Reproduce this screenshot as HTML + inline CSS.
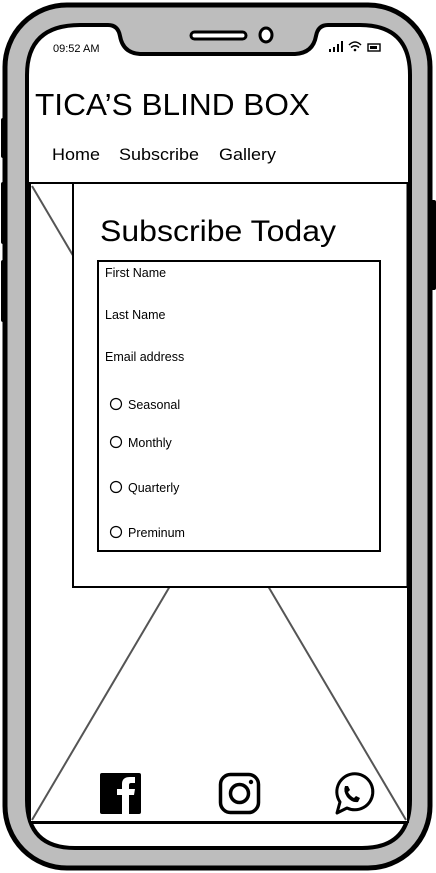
<!DOCTYPE html>
<html><head><meta charset="utf-8"><style>
html,body{margin:0;padding:0;background:#fff;width:436px;height:873px;overflow:hidden}
svg{display:block}
text{font-family:"Liberation Sans",sans-serif;fill:#000}
</style></head><body>
<svg width="436" height="873" viewBox="0 0 436 873" xmlns="http://www.w3.org/2000/svg">
<!-- side buttons -->
<rect x="1" y="118" width="6" height="40" rx="2" fill="#000"/>
<rect x="1" y="182" width="6" height="62" rx="2" fill="#000"/>
<rect x="1" y="260" width="6" height="62" rx="2" fill="#000"/>
<rect x="430" y="200" width="6" height="90" rx="2" fill="#000"/>
<!-- outer body -->
<rect x="5" y="5" width="425" height="863" rx="62" fill="#bdbdbd" stroke="#000" stroke-width="5"/>
<!-- screen -->
<path d="M80 25 L108 25 Q118 25 120 36 Q123 53 140 54 L295 54 Q313 53 316 36 Q318 25 328 25 L360 25 Q410 25 410 75 L410 800 Q410 848 362 848 L75 848 Q27 848 27 800 L27 75 Q27 25 80 25 Z" fill="#fff" stroke="#000" stroke-width="4"/>
<!-- speaker & camera -->
<rect x="191" y="32" width="55" height="7" rx="3.5" fill="#fff" stroke="#000" stroke-width="3"/>
<ellipse cx="266" cy="35" rx="6" ry="7" fill="#fff" stroke="#000" stroke-width="3"/>
<!-- status -->
<text x="53" y="52" font-size="11">09:52 AM</text>
<rect x="329" y="49" width="2" height="3" fill="#000"/><rect x="333" y="47" width="2" height="5" fill="#000"/><rect x="337" y="44" width="2" height="8" fill="#000"/><rect x="341" y="41" width="2" height="11" fill="#000"/>
<path d="M349 45 Q355 39 361 45 M351 47.5 Q355 44 359 47.5" fill="none" stroke="#000" stroke-width="1.5"/><circle cx="355" cy="50" r="1.3" fill="#000"/>
<rect x="368" y="44" width="12" height="7" fill="none" stroke="#000" stroke-width="1.4"/><rect x="370" y="46" width="7" height="3" fill="#000"/>
<!-- header -->
<text x="35" y="115" font-size="31" textLength="275" lengthAdjust="spacingAndGlyphs">TICA’S BLIND BOX</text>
<text x="52" y="160" font-size="17" textLength="48" lengthAdjust="spacingAndGlyphs">Home</text>
<text x="119" y="160" font-size="17" textLength="80" lengthAdjust="spacingAndGlyphs">Subscribe</text>
<text x="219" y="160" font-size="17" textLength="57" lengthAdjust="spacingAndGlyphs">Gallery</text>
<!-- image placeholder -->
<rect x="30" y="183" width="378" height="639" fill="#fff" stroke="#000" stroke-width="2"/>
<line x1="32" y1="186" x2="406" y2="820" stroke="#555" stroke-width="2"/>
<line x1="406" y1="186" x2="32" y2="820" stroke="#555" stroke-width="2"/>
<!-- content box -->
<rect x="73" y="183" width="335" height="404" fill="#fff" stroke="#000" stroke-width="2"/>
<line x1="408" y1="183" x2="408" y2="587" stroke="#000" stroke-width="3"/>
<text x="100" y="241" font-size="30" textLength="236" lengthAdjust="spacingAndGlyphs">Subscribe Today</text>
<rect x="98" y="261" width="282" height="290" fill="#fff" stroke="#000" stroke-width="2"/>
<text x="105" y="277" font-size="12.5">First Name</text>
<text x="105" y="319" font-size="12.5">Last Name</text>
<text x="105" y="361" font-size="12.5">Email address</text>
<g font-size="12.5">
<circle cx="116" cy="404" r="5.5" fill="none" stroke="#000" stroke-width="1.2"/><text x="128" y="409">Seasonal</text>
<circle cx="116" cy="442" r="5.5" fill="none" stroke="#000" stroke-width="1.2"/><text x="128" y="447">Monthly</text>
<circle cx="116" cy="487" r="5.5" fill="none" stroke="#000" stroke-width="1.2"/><text x="128" y="492">Quarterly</text>
<circle cx="116" cy="532" r="5.5" fill="none" stroke="#000" stroke-width="1.2"/><text x="128" y="537">Preminum</text>
</g>
<!-- bottom line -->
<line x1="30" y1="823" x2="408" y2="823" stroke="#000" stroke-width="2"/>
<!-- facebook -->
<rect x="100" y="773" width="41" height="41" rx="2" fill="#000"/>
<path d="M122 814 V795 H117 V789 H122 V784 Q122 777 130 777 H135 V783 H131 Q129 783 129 785 V789 H135 L134 795 H129 V814 Z" fill="#fff"/>
<!-- instagram -->
<rect x="220.5" y="774.5" width="38" height="38" rx="10" fill="none" stroke="#000" stroke-width="3.5"/>
<circle cx="239.5" cy="793.5" r="9" fill="none" stroke="#000" stroke-width="3.5"/>
<circle cx="251" cy="782" r="2.2" fill="#000"/>
<!-- whatsapp -->
<path d="M337 813 L340 802 A18 18 0 1 1 347 808 Z" fill="none" stroke="#000" stroke-width="3" stroke-linejoin="round"/>
<path d="M345 786 Q343 791 347 797 Q352 803 358 802 L360 798 L356 796 L354 798 Q350 796 348 792 L350 790 L348 786 Z" fill="#000"/>
</svg>
</body></html>
